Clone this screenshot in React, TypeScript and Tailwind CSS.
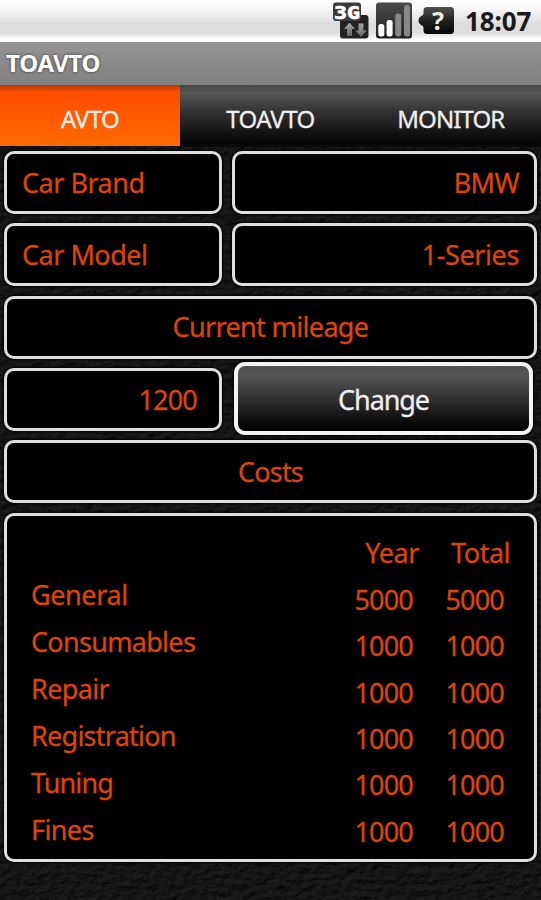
import type { ReactNode } from "react"
import clsx from "clsx"

const costs = [
    { name: "General", year: 5000, total: 5000, tracking: "tracking-[-0.4px]" },
    { name: "Consumables", year: 1000, total: 1000, tracking: "tracking-[-0.7px]" },
    { name: "Repair", year: 1000, total: 1000, tracking: "tracking-[-0.65px]" },
    { name: "Registration", year: 1000, total: 1000, tracking: "tracking-[-0.75px]" },
    { name: "Tuning", year: 1000, total: 1000, tracking: "tracking-[-0.9px]" },
    { name: "Fines", year: 1000, total: 1000, tracking: "tracking-[-0.6px]" },
]

const tabs = [
    { name: "AVTO", tracking: "tracking-[-0.5px]" },
    { name: "TOAVTO", tracking: "tracking-[-0.5px]" },
    { name: "MONITOR", tracking: "tracking-[-0.9px]" },
]

function Leather() {
    return (
        <svg className="absolute inset-0 h-full w-full" aria-hidden="true">
            <filter id="leather" x="0" y="0" width="100%" height="100%" colorInterpolationFilters="sRGB">
                <feTurbulence type="fractalNoise" baseFrequency="0.11 0.17" numOctaves="3" seed="8" result="noise" />
                <feDiffuseLighting in="noise" surfaceScale="2.4" diffuseConstant="0.115" lightingColor="#ffffff">
                    <feDistantLight azimuth="235" elevation="50" />
                </feDiffuseLighting>
            </filter>
            <rect width="100%" height="100%" filter="url(#leather)" />
        </svg>
    )
}

function NetworkIcon() {
    return (
        <svg className="h-[38px] w-[38px]" viewBox="0 0 38 38">
            <defs>
                <linearGradient id="arrow" x1="0" y1="0" x2="0" y2="1">
                    <stop offset="0" stopColor="#a5a5a5" />
                    <stop offset="1" stopColor="#666666" />
                </linearGradient>
            </defs>
            <rect x="8" y="13" width="28.5" height="23.5" rx="3" fill="#222222" />
            <rect x="1" y="0.5" width="28" height="18.5" rx="3" fill="#3b3b3b" />
            <text
                x="2"
                y="16.5"
                fill="#ffffff"
                stroke="#ffffff"
                strokeWidth="0.7"
                fontSize="18"
                fontWeight="700"
                fontFamily="'DejaVu Sans Mono', monospace"
                textLength="26"
                lengthAdjust="spacingAndGlyphs"
            >
                3G
            </text>
            <path d="M17.5 20.5 L23 27 H20 V34 H15 V27 H12 Z" fill="url(#arrow)" />
            <path d="M29 35 L23.5 28.5 H26.5 V21.5 H31.5 V28.5 H34.5 Z" fill="url(#arrow)" />
        </svg>
    )
}

function SignalIcon() {
    return (
        <svg className="h-[38px] w-[37px]" viewBox="0 0 37 38">
            <defs>
                <linearGradient id="signal" x1="0" y1="0" x2="0" y2="1">
                    <stop offset="0" stopColor="#4b4b4b" />
                    <stop offset="1" stopColor="#202020" />
                </linearGradient>
            </defs>
            <rect x="0" y="0.5" width="36" height="36" rx="3" fill="url(#signal)" />
            <rect x="2.3" y="22" width="6" height="12.5" rx="2.5" fill="#ffffff" />
            <rect x="10.6" y="18" width="6" height="16.5" rx="2.5" fill="#ffffff" />
            <rect x="19.2" y="11.5" width="6" height="23" rx="2.5" fill="#888888" />
            <rect x="28" y="3" width="6" height="31.5" rx="2.5" fill="#888888" />
        </svg>
    )
}

function BatteryIcon() {
    return (
        <svg className="h-[38px] w-[38px]" viewBox="0 0 38 38">
            <defs>
                <linearGradient id="battery" x1="0" y1="0" x2="0" y2="1">
                    <stop offset="0" stopColor="#525252" />
                    <stop offset="0.5" stopColor="#222222" />
                    <stop offset="1" stopColor="#050505" />
                </linearGradient>
            </defs>
            <path
                d="M9 5 H32.5 Q36 5 36 8.5 V28.5 Q36 32 32.5 32 H9 Q5.5 32 5.5 28.5 V25 Q4.5 23.5 2.5 22.5 Q0.5 21.5 0.5 18.5 Q0.5 15.5 2.5 14.5 Q4.5 13.5 5.5 12 V8.5 Q5.5 5 9 5 Z"
                fill="url(#battery)"
            />
            <text
                x="20"
                y="27.5"
                fill="#eeeadf"
                fontSize="25"
                fontWeight="700"
                textAnchor="middle"
                fontFamily="'Noto Sans', sans-serif"
            >
                ?
            </text>
        </svg>
    )
}

function StatusBar() {
    return (
        <div className="flex h-[42px] items-start bg-[linear-gradient(#ffffff_0%,#fbfbfb_15%,#dcdcdc_60%,#dedede_78%,#ffffff_94%)] pt-[2px] pl-[332px]">
            <NetworkIcon />
            <div className="ml-[6px]">
                <SignalIcon />
            </div>
            <div className="ml-[5px]">
                <BatteryIcon />
            </div>
            <span className="ml-[9px] text-[26px] leading-[39px] font-bold tracking-[-0.1px] text-[#1a1a1a]">18:07</span>
        </div>
    )
}

function Box({ className, children }: { className?: string; children: ReactNode }) {
    return (
        <div
            className={clsx(
                "flex h-[63px] items-center rounded-[10px] border-3 border-[#dedede] bg-black pt-px text-[27px] text-[#dc4509] shadow-[0_0_2px_1px_#000] [-webkit-text-stroke:0.3px]",
                className
            )}
        >
            {children}
        </div>
    )
}

export default function App() {
    return (
        <div className="relative h-[900px] w-[541px] overflow-hidden bg-[#141414] font-['Noto_Sans','Open_Sans',sans-serif] whitespace-nowrap">
            <Leather />
            <div className="relative">
                <StatusBar />
                <div className="flex h-[43px] items-center bg-linear-to-b from-[#959595] to-[#808080] pb-[2px] pl-[6px] text-[24px] font-bold tracking-[-0.2px] text-white [text-shadow:0_0_3px_#333]">
                    TOAVTO
                </div>
                <div className="grid h-[62px] grid-cols-3 text-[24px] text-[#eeeeee] [-webkit-text-stroke:0.3px]">
                    {tabs.map((tab, i) => (
                        <div
                            key={tab.name}
                            className={clsx(
                                "flex items-center justify-center",
                                i === 0
                                    ? "mb-px bg-[linear-gradient(#b73a08,#ff4d00_12%,#ff6a00)] pt-[7px]"
                                    : "bg-[linear-gradient(#484848,#545654_14%,#303030_45%,#080808_90%,#080808)] pt-[6px]"
                            )}
                        >
                            <span className={tab.tracking}>{tab.name}</span>
                        </div>
                    ))}
                </div>

                <div className="flex flex-col gap-[9.3px] px-1 pt-[4px]">
                    <div className="flex gap-[10px]">
                        <Box className="w-[218px] pl-[15px]">
                            <span className="tracking-[-0.5px]">Car Brand</span>
                        </Box>
                        <Box className="w-[306px] justify-end pr-[15px]">
                            <span className="tracking-[-0.6px]">BMW</span>
                        </Box>
                    </div>
                    <div className="flex gap-[10px]">
                        <Box className="w-[218px] pl-[15px]">
                            <span className="tracking-[-0.5px]">Car Model</span>
                        </Box>
                        <Box className="w-[306px] justify-end pr-[15px]">
                            <span className="tracking-[-0.4px]">1-Series</span>
                        </Box>
                    </div>
                    <Box className="justify-center">
                        <span className="tracking-[-0.65px]">Current mileage</span>
                    </Box>
                    <div className="flex h-[63px] items-start">
                        <Box className="w-[218px] justify-end pr-[22px]">
                            <span className="tracking-[-0.8px]">1200</span>
                        </Box>
                        <button className="-mt-[6px] ml-[12px] flex h-[73px] w-[299px] items-center justify-center rounded-[11px] border-4 border-[#f4f4f4] bg-[linear-gradient(#505050,#555_15%,#303030_50%,#080808_90%,#000)] pt-[4px] text-[27px] tracking-[-1.1px] text-[#eeeeee] shadow-[0_0_2px_1px_#000] [-webkit-text-stroke:0.3px]">
                            Change
                        </button>
                    </div>
                    <Box className="justify-center">
                        <span className="tracking-[-0.8px]">Costs</span>
                    </Box>
                    <div className="mt-px flex h-[349px] justify-between rounded-[10px] border-3 border-[#dedede] bg-black pr-[24px] pl-[24px] text-[27px] text-[#dc4509] shadow-[0_0_2px_1px_#000] [-webkit-text-stroke:0.3px]">
                        <div className="flex flex-col pt-[55px]">
                            {costs.map((cost) => (
                                <span key={cost.name} className={clsx("h-[47px] leading-[47px]", cost.tracking)}>
                                    {cost.name}
                                </span>
                            ))}
                        </div>
                        <div className="flex gap-[21px] pt-[14px] text-right">
                            <div className="flex w-[70px] flex-col">
                                <span className="h-[46.4px] leading-[46.4px] tracking-[-0.4px]">Year</span>
                                {costs.map((cost) => (
                                    <span key={cost.name} className="h-[46.4px] pr-[6px] leading-[46.4px] tracking-[-0.8px]">
                                        {cost.year}
                                    </span>
                                ))}
                            </div>
                            <div className="flex w-[70px] flex-col">
                                <span className="h-[46.4px] leading-[46.4px] tracking-[-0.5px]">Total</span>
                                {costs.map((cost) => (
                                    <span key={cost.name} className="h-[46.4px] pr-[6px] leading-[46.4px] tracking-[-0.8px]">
                                        {cost.total}
                                    </span>
                                ))}
                            </div>
                        </div>
                    </div>
                </div>
            </div>
        </div>
    )
}
